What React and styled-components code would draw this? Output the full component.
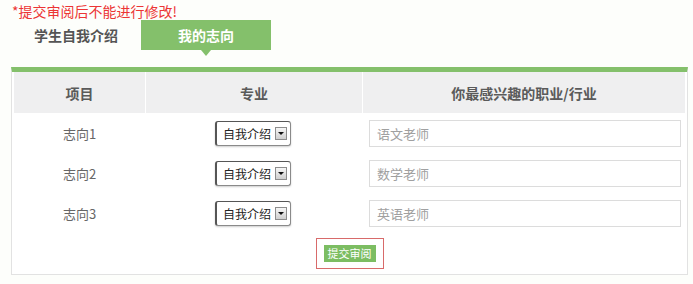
import React from 'react';
import styled, { createGlobalStyle } from 'styled-components';

const GlobalStyle = createGlobalStyle`
  html, body {
    margin: 0;
    padding: 0;
    background: #fdfefb;
    font-family: "Noto Sans CJK SC", "Noto Sans", sans-serif;
  }
`;

const green = '#84c06b';

const rows = [
  { label: '志向1', major: '自我介绍', hint: '语文老师' },
  { label: '志向2', major: '自我介绍', hint: '数学老师' },
  { label: '志向3', major: '自我介绍', hint: '英语老师' },
];

const App = () => {
  return (
    <Page>
      <GlobalStyle />
      <Warning>*提交审阅后不能进行修改!</Warning>
      <Tabs>
        <Tab>学生自我介绍</Tab>
        <Tab active>我的志向</Tab>
      </Tabs>
      <Panel>
        <Row>
          <HeadCell>项目</HeadCell>
          <HeadCell>专业</HeadCell>
          <HeadCell>你最感兴趣的职业/行业</HeadCell>
        </Row>
        {rows.map((r) => (
          <Row key={r.label}>
            <Cell>{r.label}</Cell>
            <Cell>
              <FakeSelect>
                <span>{r.major}</span>
                <DropButton />
              </FakeSelect>
            </Cell>
            <Cell align="left">
              <TextInput placeholder={r.hint} />
            </Cell>
          </Row>
        ))}
        <Footer>
          <Highlight>
            <SubmitButton>提交审阅</SubmitButton>
          </Highlight>
        </Footer>
      </Panel>
    </Page>
  );
};

export default App;

const Page = styled.div`
  width: 677px;
  padding: 3px 0 0 11px;
`;

const Warning = styled.div`
  color: #ec3535;
  font-size: 14px;
  line-height: 17px;
  padding-left: 1px;
`;

const Tabs = styled.div`
  display: flex;
  height: 30px;
  margin-bottom: 17px;
`;

const Tab = styled.div`
  position: relative;
  width: 130px;
  height: 30px;
  line-height: 30px;
  text-align: center;
  font-size: 14px;
  font-weight: bold;
  color: ${(p) => (p.active ? '#fff' : '#555')};
  background: ${(p) => (p.active ? green : 'transparent')};

  &::after {
    content: '';
    display: ${(p) => (p.active ? 'block' : 'none')};
    position: absolute;
    left: 60px;
    top: 30px;
    border-left: 5px solid transparent;
    border-right: 5px solid transparent;
    border-top: 6px solid ${green};
  }
`;

const Panel = styled.div`
  background: #fff;
  border: 1px solid #e2e2e2;
  border-top: 5px solid ${green};
  padding: 0 2px;
`;

const Row = styled.div`
  display: grid;
  grid-template-columns: 131px 216px 1fr;
  column-gap: 1px;
`;

const HeadCell = styled.div`
  height: 41px;
  background: #efeff0;
  display: flex;
  align-items: center;
  justify-content: center;
  font-size: 14px;
  font-weight: bold;
  color: #5a5a5a;
`;

const Cell = styled.div`
  height: 40px;
  display: flex;
  align-items: center;
  justify-content: ${(p) => (p.align === 'left' ? 'flex-start' : 'center')};
  padding-left: ${(p) => (p.align === 'left' ? '6px' : '0')};
  font-size: 13px;
  color: #666;
`;

const FakeSelect = styled.div`
  box-sizing: border-box;
  width: 76px;
  height: 25px;
  margin-left: -2px;
  border: 1px solid #8a8a8a;
  border-top-color: #555;
  border-left: 2px solid #555;
  border-radius: 3px;
  box-shadow: 0 1px 2px rgba(0, 0, 0, 0.2);
  display: flex;
  align-items: center;
  justify-content: space-between;
  padding: 0 3px 0 6px;
  font-size: 12px;
  color: #222;
  background: #fff;
`;

const DropButton = styled.div`
  box-sizing: border-box;
  width: 12px;
  height: 13px;
  border: 1px solid #8d8d8d;
  background: linear-gradient(#f6f6f6, #cfcfcf);
  display: flex;
  align-items: center;
  justify-content: center;

  &::before {
    content: '';
    border-left: 3px solid transparent;
    border-right: 3px solid transparent;
    border-top: 3px solid #111;
  }
`;

const TextInput = styled.input`
  box-sizing: border-box;
  width: 312px;
  height: 27px;
  border: 1px solid #dcdcdc;
  padding: 0 7px;
  font-family: inherit;
  font-size: 13px;
  color: #333;
  outline: none;

  &::placeholder {
    color: #a0a0a0;
  }
`;

const Footer = styled.div`
  height: 41px;
  display: flex;
  align-items: center;
  justify-content: center;
`;

const Highlight = styled.div`
  box-sizing: border-box;
  width: 68px;
  height: 31px;
  border: 1px solid #d86a6a;
  display: flex;
  align-items: center;
  justify-content: center;
`;

const SubmitButton = styled.button`
  width: 52px;
  height: 17px;
  padding: 0;
  border: none;
  background: #7cbd62;
  color: #fff;
  font-family: inherit;
  font-size: 11px;
  line-height: 17px;
`;
